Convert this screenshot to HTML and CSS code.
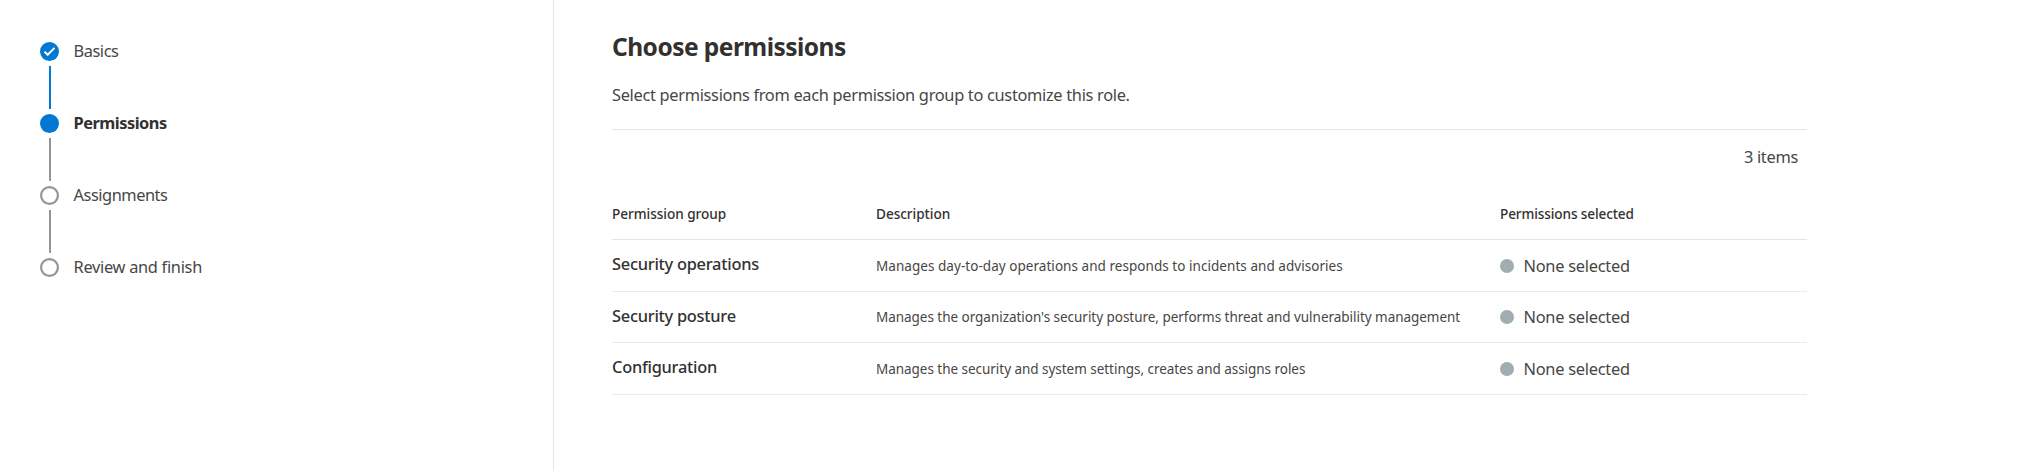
FILE: index.html
```html
<!DOCTYPE html>
<html lang="en">
<head>
<meta charset="utf-8">
<title>Choose permissions</title>
<link rel="stylesheet" href="styles.css">
</head>
<body>
<div class="wizard">
  <nav class="sidebar">
    <ol class="steps">
      <li class="step done">
        <span class="track">
          <svg class="marker" viewBox="0 0 19 19"><circle cx="9.5" cy="9.5" r="9.5" fill="#0078d4"/><path d="M4.5 9.6l3.2 3.2 6.8-6.9" fill="none" stroke="#fff" stroke-width="2"/></svg>
          <span class="line"></span>
        </span>
        <span class="label basics">Basics</span>
      </li>
      <li class="step current">
        <span class="track">
          <svg class="marker" viewBox="0 0 19 19"><circle cx="9.5" cy="9.5" r="9.5" fill="#0078d4"/></svg>
          <span class="line"></span>
        </span>
        <span class="label">Permissions</span>
      </li>
      <li class="step">
        <span class="track">
          <svg class="marker" viewBox="0 0 19 19"><circle cx="9.5" cy="9.5" r="8.4" fill="#fff" stroke="#979593" stroke-width="2.2"/></svg>
          <span class="line"></span>
        </span>
        <span class="label assignments">Assignments</span>
      </li>
      <li class="step">
        <span class="track">
          <svg class="marker" viewBox="0 0 19 19"><circle cx="9.5" cy="9.5" r="8.4" fill="#fff" stroke="#979593" stroke-width="2.2"/></svg>
        </span>
        <span class="label review">Review and finish</span>
      </li>
    </ol>
  </nav>
  <main class="content">
    <h1 class="title">Choose permissions</h1>
    <p class="subtitle">Select permissions from each permission group to customize this role.</p>
    <div class="count">3 items</div>
    <div class="grid">
      <div class="row head"><span>Permission group</span><span>Description</span><span class="head-selected">Permissions selected</span></div>
      <div class="row">
        <span class="name">Security operations</span>
        <span class="desc loose">Manages day-to-day operations and responds to incidents and advisories</span>
        <span class="status"><i class="dot"></i>None selected</span>
      </div>
      <div class="row short">
        <span class="name">Security posture</span>
        <span class="desc">Manages the organization's security posture, performs threat and vulnerability management</span>
        <span class="status"><i class="dot"></i>None selected</span>
      </div>
      <div class="row">
        <span class="name">Configuration</span>
        <span class="desc">Manages the security and system settings, creates and assigns roles</span>
        <span class="status"><i class="dot"></i>None selected</span>
      </div>
    </div>
  </main>
</div>
</body>
</html>
```
FILE: styles.css
```css
* { box-sizing: border-box; }
body {
  margin: 0;
  background: #fff;
  color: #323130;
  font: 400 16.4px/24px "Noto Sans", "Open Sans", sans-serif;
}
.wizard { display: flex; height: 471px; overflow: hidden; }
.sidebar {
  flex: none;
  width: 554px;
  padding: 42px 0 0 40px;
  border-right: 1px solid #e5e5e5;
}
.steps { margin: 0; padding: 0; list-style: none; }
.step { display: flex; gap: 14.5px; height: 72px; }
.track { display: flex; flex-direction: column; gap: 5px; width: 19px; }
.marker { display: block; width: 19px; height: 19px; }
.line { width: 2px; height: 43px; margin-left: 9px; background: #979593; }
.done .line { background: #0078d4; }
.label { color: #484644; line-height: 17px; letter-spacing: -0.45px; }
.current .label { color: #323130; font-weight: 700; letter-spacing: -0.5px; }
.label.assignments { letter-spacing: -0.47px; }
.label.review { letter-spacing: -0.3px; }

.content { width: 1253px; padding-top: 31px; padding-left: 58px; }
.title { margin: 0; font-size: 24.5px; line-height: 32px; font-weight: 700; letter-spacing: -0.53px; }
.subtitle {
  margin: 0;
  padding: 20px 0 22px;
  color: #484644;
  letter-spacing: -0.32px;
  border-bottom: 1px solid #e5e5e5;
}
.count { padding: 15px 9px 20px 0; color: #484644; letter-spacing: -0.3px; text-align: right; }
.row {
  display: grid;
  grid-template-columns: 264px 624px 1fr;
  align-items: center;
  height: 52px;
  border-bottom: 1px solid #eaeaea;
}
.row.short { height: 51px; }
.row.head { height: 51px; font-size: 13.6px; font-weight: 500; letter-spacing: -0.04px; border-color: #e5e5e5; }
.head .head-selected { letter-spacing: -0.12px; }
.name { padding-bottom: 3px; font-weight: 500; letter-spacing: -0.26px; }
.desc { color: #484644; font-size: 13.5px; letter-spacing: -0.035px; white-space: nowrap; }
.desc.loose { letter-spacing: 0.045px; }
.status { display: flex; align-items: center; gap: 9.5px; color: #484644; letter-spacing: -0.26px; }
.dot { width: 14px; height: 14px; border-radius: 50%; background: #a0aeb2; }
```
